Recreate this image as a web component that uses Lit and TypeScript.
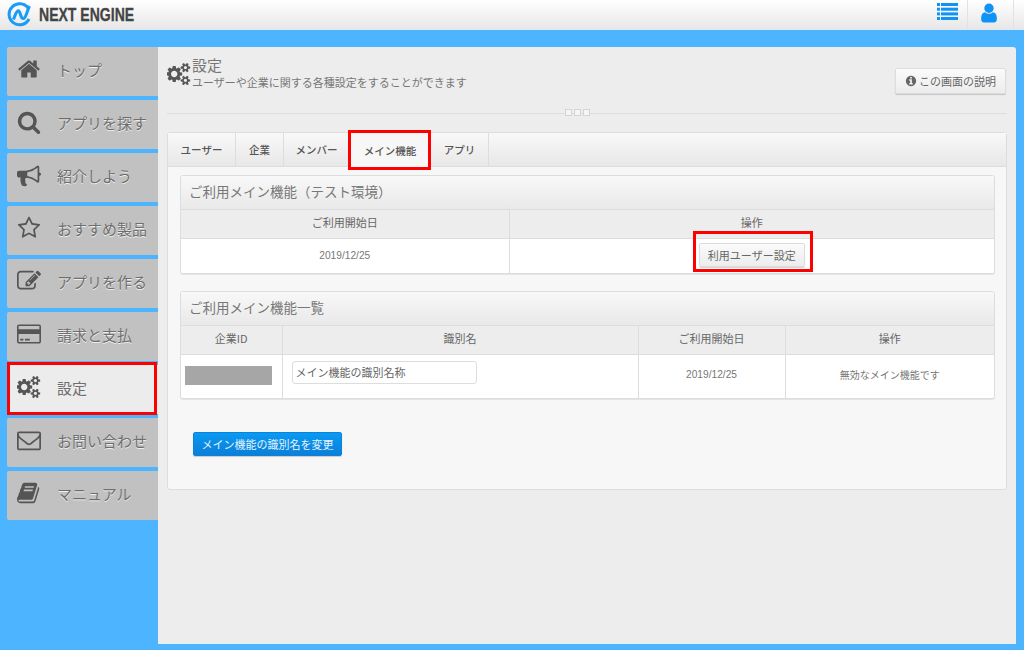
import { LitElement, html, css, svg } from 'lit';
import { customElement } from 'lit/decorators.js';

const ICONS = {
  home: ['0 0 1792 1792', 'M1472 992v480q0 26-19 45t-45 19h-384v-384h-256v384h-384q-26 0-45-19t-19-45v-480q0-1 .5-3t.5-3l575-474 575 474q1 2 1 6zm223-69l-62 74q-8 9-21 11h-3q-13 0-21-7l-692-577-692 577q-12 8-24 7-13-2-21-11l-62-74q-8-10-7-23.5t11-21.5l719-599q32-26 76-26t76 26l244 204v-195q0-14 9-23t23-9h192q14 0 23 9t9 23v408l219 182q10 8 11 21.5t-7 23.5z'],
  search: ['0 0 1792 1792', 'M1216 832q0-185-131.5-316.5t-316.5-131.5-316.5 131.5-131.5 316.5 131.5 316.5 316.5 131.5 316.5-131.5 131.5-316.5zm512 832q0 52-38 90t-90 38q-54 0-90-38l-343-342q-179 124-399 124-143 0-273.5-55.5t-225-150-150-225-55.5-273.5 55.5-273.5 150-225 225-150 273.5-55.5 273.5 55.5 225 150 150 225 55.5 273.5q0 220-124 399l343 343q37 37 37 90z'],
  bullhorn: ['0 0 1792 1792', 'M1664 704q53 0 90.5 37.5t37.5 90.5-37.5 90.5-90.5 37.5v384q0 52-38 90t-90 38q-417-347-812-380-58 19-91 66t-31 100.5 40 92.5q-20 33-23 65.5t6 58 33.5 55 48 50 61.5 50.5q-29 58-111.5 83t-168.5 11.5-132-55.5q-7-23-29.5-87.5t-32-94.5-23-89-15-101 3.5-98.5 22-110.5h-122q-66 0-113-47t-47-113v-192q0-66 47-113t113-47h480q435 0 896-384 52 0 90 38t38 90v384zm-128 604v-954q-394 302-768 343v270q377 42 768 341z'],
  star: ['0 0 1792 1792', 'M1201 1004l306-297-422-62-189-382-189 382-422 62 306 297-73 421 378-199 377 199zm527-357q0 22-26 48l-363 354 86 500q1 7 1 20 0 50-41 50-19 0-40-12l-449-236-449 236q-22 12-40 12-21 0-31.5-14.5t-10.5-35.5q0-6 2-20l86-500-364-354q-25-27-25-48 0-37 56-46l502-73 225-455q19-41 49-41t49 41l225 455 502 73q56 9 56 46z'],
  edit: ['0 0 1792 1792', 'M888 1184l116-116-152-152-116 116v56h96v96h56zm440-720q-16-16-33 1l-350 350q-17 17-1 33t33-1l350-350q17-17 1-33zm80 594v190q0 119-84.5 203.5t-203.5 84.5h-832q-119 0-203.5-84.5t-84.5-203.5v-832q0-119 84.5-203.5t203.5-84.5h832q63 0 117 25 15 7 18 23 3 17-9 29l-49 49q-14 14-32 8-23-6-45-6h-832q-66 0-113 47t-47 113v832q0 66 47 113t113 47h832q66 0 113-47t47-113v-126q0-13 9-22l64-64q15-15 35-7t20 29zm-96-738l288 288-672 672h-288v-288zm444 132l-92 92-288-288 92-92q28-28 68-28t68 28l152 152q28 28 28 68t-28 68z'],
  card: ['0 0 1920 1792', 'M1760 128q66 0 113 47t47 113v1216q0 66-47 113t-113 47h-1600q-66 0-113-47t-47-113v-1216q0-66 47-113t113-47h1600zm-1600 128q-13 0-22.5 9.5t-9.5 22.5v224h1664v-224q0-13-9.5-22.5t-22.5-9.5h-1600zm1600 1280q13 0 22.5-9.5t9.5-22.5v-608h-1664v608q0 13 9.5 22.5t22.5 9.5h1600zm-1504-128v-128h256v128h-256zm384 0v-128h384v128h-384z'],
  cogs: ['0 0 1920 1792', 'M832 896q0-106-75-181t-181-75-181 75-75 181 75 181 181 75 181-75 75-181zm768 512q0-52-38-90t-90-38-90 38-38 90q0 53 37.5 90.5t90.5 37.5 90.5-37.5 37.5-90.5zm0-1024q0-52-38-90t-90-38-90 38-38 90q0 53 37.5 90.5t90.5 37.5 90.5-37.5 37.5-90.5zm-384 421v185q0 10-7 19.5t-16 10.5l-155 24q-11 35-32 76 34 48 90 115 7 11 7 20 0 12-7 19-23 30-82.5 89.5t-78.5 59.5q-11 0-21-7l-115-90q-37 19-77 31-11 108-23 155-7 24-30 24h-186q-11 0-20-7.5t-10-17.5l-23-153q-34-10-75-31l-118 89q-7 7-20 7-11 0-21-8-144-133-144-160 0-9 7-19 10-14 41-53t47-61q-23-44-35-82l-152-24q-10-1-17-9.5t-7-19.5v-185q0-10 7-19.5t16-10.5l155-24q11-35 32-76-34-48-90-115-7-11-7-20 0-12 7-20 22-30 82-89t79-59q11 0 21 7l115 90q34-18 77-32 11-108 23-154 7-24 30-24h186q11 0 20 7.5t10 17.5l23 153q34 10 75 31l118-89q8-7 20-7 11 0 21 8 144 133 144 160 0 8-7 19-12 16-42 54t-45 60q23 48 34 82l152 23q10 2 17 10.5t7 19.5zm640 533v140q0 16-149 31-12 27-30 52 51 113 51 138 0 4-4 7-122 71-124 71-8 0-46-47t-52-68q-20 2-30 2t-30-2q-14 21-52 68t-46 47q-2 0-124-71-4-3-4-7 0-25 51-138-18-25-30-52-149-15-149-31v-140q0-16 149-31 13-29 30-52-51-113-51-138 0-4 4-7 4-2 35-20t59-34 30-16q8 0 46 46.5t52 67.5q20-2 30-2t30 2q51-71 92-112l6-2q4 0 124 70 4 3 4 7 0 25-51 138 17 23 30 52 149 15 149 31zm0-1024v140q0 16-149 31-12 27-30 52 51 113 51 138 0 4-4 7-122 71-124 71-8 0-46-47t-52-68q-20 2-30 2t-30-2q-14 21-52 68t-46 47q-2 0-124-71-4-3-4-7 0-25 51-138-18-25-30-52-149-15-149-31v-140q0-16 149-31 13-29 30-52-51-113-51-138 0-4 4-7 4-2 35-20t59-34 30-16q8 0 46 46.5t52 67.5q20-2 30-2t30 2q51-71 92-112l6-2q4 0 124 70 4 3 4 7 0 25-51 138 17 23 30 52 149 15 149 31z'],
  envelope: ['0 0 1792 1792', 'M1664 1504v-768q-32 36-69 66-268 206-426 338-51 43-83 67t-86.5 48.5-102.5 24.5h-2q-48 0-102.5-24.5t-86.5-48.5-83-67q-158-132-426-338-37-30-69-66v768q0 13 9.5 22.5t22.5 9.5h1472q13 0 22.5-9.5t9.5-22.5zm0-1051v-24.5l-.5-13-3-12.5-5.5-9-9-7.5-14-2.5h-1472q-13 0-22.5 9.5t-9.5 22.5q0 168 147 284 193 152 401 317 6 5 35 29.5t46 37.5 44.5 31.5 50.5 27.5 43 9h2q20 0 43-9t50.5-27.5 44.5-31.5 46-37.5 35-29.5q208-165 401-317 54-43 100.5-115.5t46.5-131.5zm128-37v1088q0 66-47 113t-113 47h-1472q-66 0-113-47t-47-113v-1088q0-66 47-113t113-47h1472q66 0 113 47t47 113z'],
  book: ['0 0 1792 1792', 'M1639 478q40 57 18 129l-275 906q-19 64-76.5 107.5t-122.5 43.5h-923q-77 0-148.5-53.5t-99.5-131.5q-24-67-2-127 0-4 3-27t4-37q1-8-3-21.5t-3-19.5q2-11 8-21t16.5-23.5 16.5-23.5q23-38 45-91.5t30-91.5q3-10 .5-30t-.5-28q3-11 17-28t17-23q21-36 42-92t25-90q1-9-2.5-32t.5-28q4-13 22-30.5t22-22.5q19-26 42.5-84.5t27.5-96.5q1-8-3-25.5t-2-26.5q2-8 9-18t18-23 17-21q8-12 16.5-30.5t15-35 16-36 19.5-32 26.5-23.5 36-11.5 47.5 5.5l-1 3q38-9 51-9h761q74 0 114 56t18 130l-274 906q-36 119-71.5 153.5t-128.5 34.5h-869q-27 0-38 15-11 16-1 43 24 70 144 70h923q29 0 56-15.5t35-41.5l300-987q7-22 5-57 38 15 59 43zm-1064 2q-4 13 2 22.5t20 9.5h608q13 0 25.5-9.5t16.5-22.5l21-64q4-13-2-22.5t-20-9.5h-608q-13 0-25.5 9.5t-16.5 22.5zm-83 256q-4 13 2 22.5t20 9.5h608q13 0 25.5-9.5t16.5-22.5l21-64q4-13-2-22.5t-20-9.5h-608q-13 0-25.5 9.5t-16.5 22.5z'],
  user: ['0 0 1792 1792', 'M1536 1399q0 109-62.5 187t-150.5 78h-854q-88 0-150.5-78t-62.5-187q0-85 8.5-160.5t31.5-152 58.5-131 94-89 134.5-34.5q131 128 313 128t313-128q76 0 134.5 34.5t94 89 58.5 131 31.5 152 8.5 160.5zm-256-887q0 159-112.5 271.5t-271.5 112.5-271.5-112.5-112.5-271.5 112.5-271.5 271.5-112.5 271.5 112.5 112.5 271.5z'],
  info: ['0 0 1792 1792', 'M1152 1376v-160q0-14-9-23t-23-9h-96v-512q0-14-9-23t-23-9h-320q-14 0-23 9t-9 23v160q0 14 9 23t23 9h96v320h-96q-14 0-23 9t-9 23v160q0 14 9 23t23 9h448q14 0 23-9t9-23zm-128-896v-160q0-14-9-23t-23-9h-192q-14 0-23 9t-9 23v160q0 14 9 23t23 9h192q14 0 23-9t9-23zm640 416q0 209-103 385.5t-279.5 279.5-385.5 103-385.5-103-279.5-279.5-103-385.5 103-385.5 279.5-279.5 385.5-103 385.5 103 279.5 279.5 103 385.5z'],
} as const;

type IconName = keyof typeof ICONS;

const icon = (name: IconName, size: number) => {
  const [box, d] = ICONS[name];
  return html`<svg width=${size} height=${size} viewBox=${box} fill="currentColor">${svg`<path d=${d}></path>`}</svg>`;
};

const NAV: { label: string; icon: IconName; active?: boolean }[] = [
  { label: 'トップ', icon: 'home' },
  { label: 'アプリを探す', icon: 'search' },
  { label: '紹介しよう', icon: 'bullhorn' },
  { label: 'おすすめ製品', icon: 'star' },
  { label: 'アプリを作る', icon: 'edit' },
  { label: '請求と支払', icon: 'card' },
  { label: '設定', icon: 'cogs', active: true },
  { label: 'お問い合わせ', icon: 'envelope' },
  { label: 'マニュアル', icon: 'book' },
];

const TABS = [
  { label: 'ユーザー', width: 68 },
  { label: '企業', width: 48 },
  { label: 'メンバー', width: 66 },
  { label: 'メイン機能', width: 81, active: true },
  { label: 'アプリ', width: 58 },
];

@customElement('app-root')
export class AppRoot extends LitElement {
  static styles = css`
    :host {
      display: block;
      width: 1024px;
      height: 650px;
      overflow: hidden;
      background: #4db4ff;
      color: #666;
      font-family: 'Noto Sans CJK JP', 'Liberation Sans', sans-serif;
      font-size: 11px;
    }

    .topbar {
      height: 30px;
      display: flex;
      align-items: center;
      background: linear-gradient(#fff, #e6e6e6);
    }
    .logo {
      margin-left: 6px;
      display: block;
    }
    .brand {
      margin-left: 6px;
      font-family: 'Liberation Sans Narrow', 'Liberation Sans', sans-serif;
      font-weight: 700;
      font-size: 18px;
      color: #444;
      transform: scaleX(0.78);
      transform-origin: left center;
      white-space: nowrap;
      -webkit-text-stroke: 0.3px #444;
    }
    .top-actions {
      margin-left: auto;
      display: flex;
      height: 30px;
      margin-right: 10px;
      color: #0f93f5;
    }
    .top-action {
      height: 30px;
      display: flex;
      justify-content: center;
      padding-top: 3px;
      box-sizing: border-box;
      border-right: 1px solid #e2e2e2;
    }
    .top-action.list { width: 46px; padding-left: 6px; }
    .top-action.person { width: 46px; padding-top: 2px; padding-right: 3px; }
    .list-icon { display: block; }

    .layout {
      display: flex;
      height: 620px;
      padding-top: 17px;
      box-sizing: border-box;
    }

    nav {
      width: 158px;
      flex: none;
      padding-left: 7px;
      box-sizing: border-box;
      display: flex;
      flex-direction: column;
      gap: 4px;
    }
    .nav-item {
      position: relative;
      height: 49px;
      flex: none;
      display: flex;
      align-items: center;
      padding-bottom: 5px;
      box-sizing: border-box;
      background: #c1c1c1;
      border-radius: 2px 0 0 2px;
      font-size: 15px;
      color: #6e6e6e;
      text-shadow: 0 1px 0 #eee;
    }
    .nav-item.active {
      background: #ececec;
    }
    .nav-item.active::after {
      content: '';
      position: absolute;
      inset: -3px 1px -1px 0;
      border: 3px solid #f00;
    }
    .nav-icon {
      width: 44px;
      margin-right: 6px;
      flex: none;
      display: flex;
      justify-content: center;
      color: #555;
    }

    main {
      width: 858px;
      height: 597px;
      flex: none;
      padding: 0 9px;
      box-sizing: border-box;
      background: #ededed;
      border-radius: 0 3px 0 0;
    }
    .page-head {
      height: 66px;
      display: flex;
      align-items: flex-start;
      border-bottom: 1px solid #ddd;
    }
    .page-icon {
      margin-top: 15px;
      flex: none;
      height: 24px;
      color: #555;
    }
    .page-text {
      margin-left: 1px;
      padding-top: 9px;
    }
    .page-title {
      font-size: 15px;
      line-height: 18px;
      color: #777;
    }
    .page-desc {
      line-height: 17px;
      color: #777;
    }
    .help {
      margin-left: auto;
      margin-top: 21px;
      margin-right: 1px;
      width: 111px;
      height: 26px;
      display: flex;
      align-items: center;
      justify-content: center;
      gap: 2px;
    }

    button {
      font: inherit;
      color: inherit;
      padding: 0;
      border: 1px solid #ddd;
      border-radius: 2px;
      background: linear-gradient(#fbfbfb, #ececec);
      box-shadow: 0 1px 1px rgba(0, 0, 0, 0.18);
    }

    .divider {
      height: 0;
      display: flex;
      justify-content: center;
      gap: 2px;
      padding-right: 20px;
    }
    .divider i {
      width: 7px;
      height: 7px;
      margin-top: -5px;
      background: #f5f5f5;
      border: 1px solid #d4d4d4;
      box-sizing: border-box;
    }

    .tabs-panel {
      margin-top: 18px;
      height: 358px;
      box-sizing: border-box;
      border: 1px solid #ddd;
      border-radius: 3px;
      background: #f7f7f7;
    }
    .tabs {
      height: 33px;
      display: flex;
      background: linear-gradient(#f8f8f8, #e8e8e8);
      border-bottom: 1px solid #ddd;
    }
    .tab {
      position: relative;
      height: 33px;
      display: flex;
      align-items: center;
      justify-content: center;
      border-right: 1px solid #ddd;
      font-size: 10.5px;
      font-weight: 500;
      color: #555;
      box-sizing: border-box;
      flex: none;
    }
    .tab.active {
      background: #f7f7f7;
      height: 34px;
    }
    .tab.active::after {
      content: '';
      position: absolute;
      inset: -3px -1px -3px -2px;
      border: 3px solid #f00;
    }

    .tab-body {
      padding: 8px 11px 0 12px;
    }
    .panel {
      border: 1px solid #ddd;
      border-radius: 3px;
      box-shadow: 0 1px 0 #e4e4e4;
      background: #fff;
      overflow: hidden;
    }
    .panel + .panel {
      margin-top: 17px;
    }
    .panel h3 {
      margin: 0;
      height: 33px;
      line-height: 30px;
      padding-left: 8px;
      font-size: 13.5px;
      font-weight: 400;
      color: #777;
      background: linear-gradient(#f8f8f8, #e9e9e9);
      border-bottom: 1px solid #ddd;
    }
    table {
      width: 100%;
      border-collapse: collapse;
      table-layout: fixed;
    }
    th, td {
      text-align: center;
      padding: 0;
      font-weight: 400;
      border-left: 1px solid #ddd;
    }
    th:first-child, td:first-child {
      border-left: 0;
    }
    th {
      height: 28px;
      padding-bottom: 3px;
      box-sizing: border-box;
      background: #ededed;
      border-bottom: 1px solid #ddd;
    }
    td {
      background: #fff;
    }
    .first td { height: 35px; padding-bottom: 1px; box-sizing: border-box; }
    .second td { height: 44px; padding-bottom: 3px; box-sizing: border-box; }
    .date {
      font-family: 'Liberation Sans', sans-serif;
      font-size: 10.2px;
      color: #777;
    }
    .muted {
      font-size: 10px;
      color: #777;
    }

    .user-btn {
      position: relative;
      width: 106px;
      height: 24px;
      display: inline-block;
      vertical-align: middle;
    }
    .user-btn::after {
      content: '';
      position: absolute;
      inset: -13px -9px -6px -7px;
      border: 3px solid #f00;
    }

    .redacted {
      width: 87px;
      height: 19px;
      margin: 2px 0 0 4px;
      background: #a6a6a6;
    }
    .name-cell {
      text-align: left;
      padding-left: 9px;
    }
    .name-input {
      width: 185px;
      height: 23px;
      padding: 0 3px;
      box-sizing: border-box;
      border: 1px solid #ddd;
      border-radius: 3px;
      font: inherit;
      color: #666;
      background: #fff;
      outline: none;
      display: block;
      margin-top: -5px;
    }

    .primary {
      display: block;
      margin: 33px 0 0 13px;
      width: 149px;
      height: 24px;
      color: #e6f4ff;
      border: 1px solid #0b83dc;
      background: linear-gradient(#0a9af2, #0a7fd8);
    }
  `;

  render() {
    return html`
      <header class="topbar">
        <svg class="logo" width="27" height="26" viewBox="0 0 27 26" fill="none" stroke="#1a9bf5" stroke-width="3">
          <path d="M22 6A10.500 10.500 0 1 0 23 17"></path>
          <path d="M7.500 17.500C10 10 12 7 13.500 10s1.500 7 4 6.500S21 9 23.500 4"></path>
        </svg>
        <span class="brand">NEXT ENGINE</span>
        <div class="top-actions">
          <div class="top-action list">
            <svg class="list-icon" width="21" height="17" viewBox="0 0 21 17" fill="currentColor">
              <rect y="0" width="3" height="3"></rect><rect x="4" y="0" width="17" height="3"></rect>
              <rect y="4.700" width="3" height="3"></rect><rect x="4" y="4.700" width="17" height="3"></rect>
              <rect y="9.400" width="3" height="3"></rect><rect x="4" y="9.400" width="17" height="3"></rect>
              <rect y="14" width="3" height="3"></rect><rect x="4" y="14" width="17" height="3"></rect>
            </svg>
          </div>
          <div class="top-action person">${icon('user', 22)}</div>
        </div>
      </header>
      <div class="layout">
        <nav>
          ${NAV.map(
            (item) => html`
              <div class="nav-item ${item.active ? 'active' : ''}">
                <span class="nav-icon">${icon(item.icon, 24)}</span>
                <span>${item.label}</span>
              </div>
            `
          )}
        </nav>
        <main>
          <div class="page-head">
            <span class="page-icon">${icon('cogs', 24)}</span>
            <div class="page-text">
              <div class="page-title">設定</div>
              <div class="page-desc">ユーザーや企業に関する各種設定をすることができます</div>
            </div>
            <button class="help">${icon('info', 12)}この画面の説明</button>
          </div>
          <div class="divider"><i></i><i></i><i></i></div>

          <section class="tabs-panel">
            <div class="tabs">
              ${TABS.map(
                (tab) => html`
                  <div class="tab ${tab.active ? 'active' : ''}" style="width:${tab.width}px">${tab.label}</div>
                `
              )}
            </div>
            <div class="tab-body">
              <div class="panel first">
                <h3>ご利用メイン機能（テスト環境）</h3>
                <table>
                  <colgroup><col style="width:328px" /><col /></colgroup>
                  <tr><th>ご利用開始日</th><th>操作</th></tr>
                  <tr>
                    <td class="date">2019/12/25</td>
                    <td><button class="user-btn">利用ユーザー設定</button></td>
                  </tr>
                </table>
              </div>
              <div class="panel second">
                <h3>ご利用メイン機能一覧</h3>
                <table>
                  <colgroup>
                    <col style="width:101px" /><col style="width:356px" /><col style="width:147px" /><col />
                  </colgroup>
                  <tr><th>企業ID</th><th>識別名</th><th>ご利用開始日</th><th>操作</th></tr>
                  <tr>
                    <td><div class="redacted"></div></td>
                    <td class="name-cell"><input class="name-input" .value=${'メイン機能の識別名称'} /></td>
                    <td class="date">2019/12/25</td>
                    <td class="muted">無効なメイン機能です</td>
                  </tr>
                </table>
              </div>
              <button class="primary">メイン機能の識別名を変更</button>
            </div>
          </section>
        </main>
      </div>
    `;
  }
}
